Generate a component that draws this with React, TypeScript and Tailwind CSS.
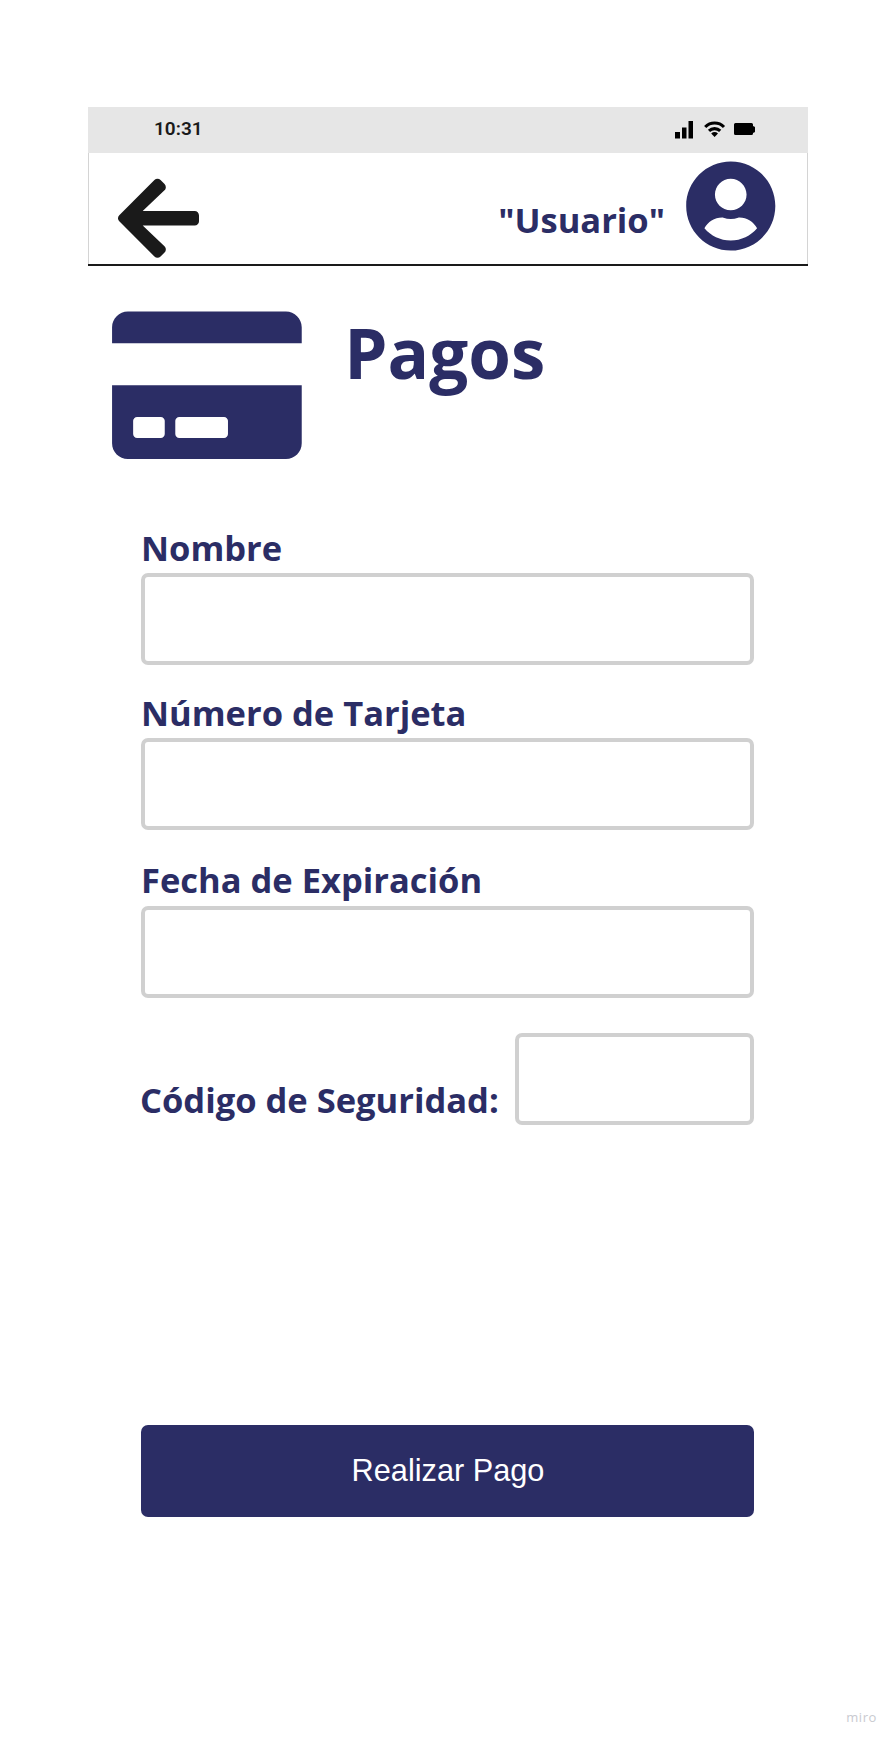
import React from "react";
import { FaArrowLeft, FaCreditCard, FaUserCircle } from "react-icons/fa";

const label = "block h-[48px] whitespace-nowrap text-[34.5px] leading-[48px] font-bold";
const field = "block h-[92px] rounded-[7px] border-4 border-[#d0d0d0] bg-white outline-none";

function StatusBar() {
  return (
    <div className="flex h-[46px] items-center justify-between bg-[#e6e6e6] pr-[52px] pl-[66px]">
      <span className="-mt-[2px] font-[Roboto,sans-serif] text-[19px] leading-[20px] font-semibold text-[#1a1a1a]">
        10:31
      </span>
      <svg width="81" height="20" viewBox="0 0 81 20" fill="#000">
        <rect x="0" y="12" width="5" height="6.5" />
        <rect x="7" y="7.5" width="4.5" height="11" />
        <rect x="13.5" y="1" width="4.5" height="17.5" />
        <g fill="none" stroke="#000" strokeWidth="3.1">
          <path d="M30.2 7a13.2 13.2 0 0 1 18.8 0" />
          <path d="M34 10.9a8 8 0 0 1 11.2 0" />
        </g>
        <path d="M36.2 13.5q3.4-2.8 6.8 0l-3.4 3.4z" />
        <path d="M60.5 3h16q1.5 0 1.5 1.5v1.7h1l1 1v4.6l-1 1h-1v.7q0 1.5-1.5 1.5h-16q-1.500 0-1.500-1.500v-9q0-1.500 1.500-1.500z" />
      </svg>
    </div>
  );
}

export default function App() {
  return (
    <main className="flex min-h-[1742px] w-[896px] flex-col bg-white pt-[107px] font-['Open_Sans',sans-serif] text-[#2b2d65]">
      <header className="mx-[88px] h-[159px] border-b-2 border-[#1a1a1a]">
        <StatusBar />
        <div className="flex h-[111px] justify-between border-x border-[#d4d4d4] pr-[31.5px] pl-[29px]">
          <button aria-label="Volver" className="mt-[18.5px] h-[92.6px] w-[81px] text-[#1a1a1a]">
            <FaArrowLeft className="h-[92.6px] w-[81px]" />
          </button>
          <div className="flex">
            <span className="mt-[43px] mr-[21px] text-[34.5px] leading-[48px] font-bold">"Usuario"</span>
            <FaUserCircle className="mt-[7px] h-[92px] w-[89.5px]" />
          </div>
        </div>
      </header>

      <div className="mt-[35px] ml-[112.4px] flex h-[169px]">
        <FaCreditCard className="h-[168.6px] w-[189.8px]" />
        <h1 className="mt-[4px] ml-[42px] text-[69px] leading-[94px] font-bold">Pagos</h1>
      </div>

      <form className="mr-[142px] ml-[141px] flex flex-col">
        <label className={label + " mt-[53.5px]"} htmlFor="nombre">Nombre</label>
        <input id="nombre" className={field + " mt-[1.5px]"} />
        <label className={label + " mt-[23.5px]"} htmlFor="numero">Número de Tarjeta</label>
        <input id="numero" className={field + " mt-[1.5px]"} />
        <label className={label + " mt-[25.5px]"} htmlFor="fecha">Fecha de Expiración</label>
        <input id="fecha" className={field + " mt-[2.5px]"} />
        <div className="mt-[35px] flex justify-between">
          <label className="-ml-px pt-[42.5px] text-[34.5px] leading-[48px] font-bold whitespace-nowrap" htmlFor="codigo">
            Código de Seguridad:
          </label>
          <input id="codigo" className={field + " w-[239px]"} />
        </div>
        <button
          type="button"
          className="mt-[300px] h-[92px] rounded-[7px] bg-[#2b2d65] pl-px font-['Liberation_Sans',sans-serif] text-[30.7px] text-white"
        >
          Realizar Pago
        </button>
      </form>

      <footer className="mt-auto mr-[19px] mb-[16px] self-end text-[13px] leading-[18px] font-medium tracking-[0.6px] text-[#c9cad0]">
        miro
      </footer>
    </main>
  );
}
